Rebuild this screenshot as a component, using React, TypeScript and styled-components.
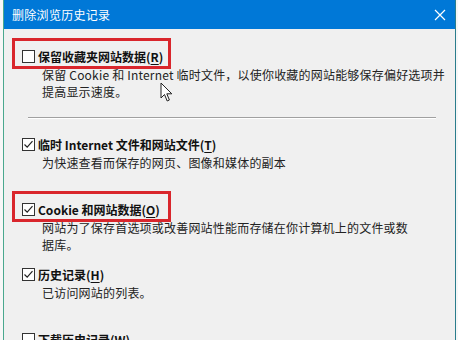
import * as React from "react";
import styled, { createGlobalStyle } from "styled-components";

const GlobalStyle = createGlobalStyle`
  html, body {
    margin: 0;
    padding: 0;
    background: #f7f7f7;
    overflow: hidden;
  }
  body {
    font-family: "Noto Sans CJK SC", "Noto Sans", sans-serif;
  }
`;

const options = [
  {
    label: "保留收藏夹网站数据",
    key: "R",
    checked: false,
    marked: true,
    gap: 0,
    lines: [
      "保留 Cookie 和 Internet 临时文件，以使你收藏的网站能够保存偏好选项并",
      "提高显示速度。"
    ]
  },
  {
    label: "临时 Internet 文件和网站文件",
    key: "T",
    checked: true,
    marked: false,
    gap: 16,
    lines: ["为快速查看而保存的网页、图像和媒体的副本"]
  },
  {
    label: "Cookie 和网站数据",
    key: "O",
    checked: true,
    marked: true,
    gap: 12,
    lines: ["网站为了保存首选项或改善网站性能而存储在你计算机上的文件或数", "据库。"]
  },
  {
    label: "历史记录",
    key: "H",
    checked: true,
    marked: false,
    gap: 12,
    lines: ["已访问网站的列表。"]
  },
  {
    label: "下载历史记录",
    key: "W",
    checked: false,
    marked: false,
    gap: 12,
    lines: ["你已下载的文件的列表。"]
  }
];

const CheckBox = ({ checked }: { checked: boolean }) => (
  <Box>
    {checked && (
      <svg width="11" height="11" viewBox="0 0 11 11">
        <path d="M1.5 5.5 L4.2 8.2 L9.5 2.2" fill="none" stroke="#222" strokeWidth="1.2" />
      </svg>
    )}
  </Box>
);

const Option = ({ opt }: { opt: (typeof options)[number] }) => (
  <OptionBlock $gap={opt.gap}>
    <LabelRow>
      {opt.marked && <Marker />}
      <CheckBox checked={opt.checked} />
      <Label>
        {opt.label}(<u>{opt.key}</u>)
      </Label>
    </LabelRow>
    <Desc>
      {opt.lines.map((l, i) => (
        <div key={i}>{l}</div>
      ))}
    </Desc>
  </OptionBlock>
);

const App = () => (
  <>
    <GlobalStyle />
    <Window>
      <TitleBar>
        <Title>删除浏览历史记录</Title>
        <Close>
          <svg width="12" height="12" viewBox="0 0 12 12">
            <path d="M1 1 L11 11 M11 1 L1 11" stroke="#fff" strokeWidth="1.2" />
          </svg>
        </Close>
      </TitleBar>
      <Body>
        <Option opt={options[0]} />
        <Separator />
        {options.slice(1).map(o => (
          <Option key={o.key} opt={o} />
        ))}
        <Cursor>
          <svg width="14" height="21" viewBox="0 0 14 21">
            <path
              d="M1 1 L1 16 L4.5 12.5 L7.2 19 L9.4 18 L6.8 11.8 L11.8 11.8 Z"
              fill="#fff"
              stroke="#222"
              strokeWidth="1"
              strokeLinejoin="round"
            />
          </svg>
        </Cursor>
      </Body>
    </Window>
  </>
);

const Window = styled.div`
  width: 451px;
  height: 340px;
  margin-left: 3px;
  border-left: 1px solid #4aa88e;
  border-right: 1px solid #2a7d8c;
  background: #f0f0f0;
  overflow: hidden;
`;

const TitleBar = styled.div`
  height: 29px;
  margin-left: -4px;
  padding-left: 12px;
  background: #0078d7;
  display: flex;
  align-items: center;
  justify-content: space-between;
`;

const Title = styled.div`
  color: #fff;
  font-size: 12px;
  line-height: 16px;
  padding-top: 1px;
  letter-spacing: 0.3px;
`;

const Close = styled.div`
  width: 30px;
  height: 29px;
  display: flex;
  align-items: center;
  justify-content: center;
`;

const Body = styled.div`
  position: relative;
  padding: 18px 0 0 18px;
`;

const OptionBlock = styled.div<{ $gap: number }>`
  margin-top: ${p => p.$gap}px;
`;

const LabelRow = styled.div`
  position: relative;
  display: flex;
  align-items: center;
  height: 18px;
`;

const Marker = styled.div`
  position: absolute;
  left: -10px;
  top: -9px;
  bottom: -4px;
  width: 159px;
  border: 3px solid #d9262c;
  box-sizing: border-box;
`;

const Box = styled.div`
  width: 13px;
  height: 13px;
  box-sizing: border-box;
  border: 1px solid #333;
  background: #fff;
  display: flex;
  align-items: center;
  justify-content: center;
  flex-shrink: 0;
`;

const Label = styled.span`
  margin-left: 3px;
  font-size: 12px;
  font-weight: 700;
  color: #111;
  white-space: nowrap;

  u {
    text-underline-offset: 2px;
  }
`;

const Desc = styled.div`
  margin-top: 1px;
  padding-left: 20px;
  min-height: 34px;
  font-size: 12px;
  line-height: 17px;
  letter-spacing: 0.2px;
  color: #222;
  white-space: nowrap;
`;

const Separator = styled.div`
  margin: 17px 0 0 6px;
  width: 408px;
  height: 1px;
  background: #a0a0a0;
  border-bottom: 1px solid #fff;
`;

const Cursor = styled.div`
  position: absolute;
  left: 156px;
  top: 53px;
  line-height: 0;
`;

export default App;
